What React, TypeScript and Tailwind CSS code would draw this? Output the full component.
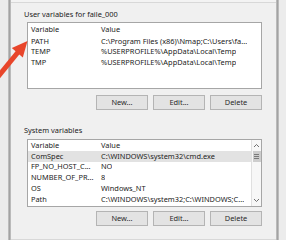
const userVars = [
  { name: 'PATH', value: 'C:\\Program Files (x86)\\Nmap;C:\\Users\\fa...' },
  { name: 'TEMP', value: '%USERPROFILE%\\AppData\\Local\\Temp' },
  { name: 'TMP', value: '%USERPROFILE%\\AppData\\Local\\Temp' },
];

const systemVars = [
  { name: 'ComSpec', value: 'C:\\WINDOWS\\system32\\cmd.exe', selected: true },
  { name: 'FP_NO_HOST_C...', value: 'NO' },
  { name: 'NUMBER_OF_PR...', value: '8' },
  { name: 'OS', value: 'Windows_NT' },
  { name: 'Path', value: 'C:\\WINDOWS\\system32;C:\\WINDOWS;C...' },
];

function Buttons({ className }: { className: string }) {
  return (
    <div className={`flex justify-end gap-[5px] ${className}`}>
      {['New...', 'Edit...', 'Delete'].map((label) => (
        <div
          key={label}
          className="flex h-[15px] w-[52px] items-center justify-center border border-[#b4b4b4] bg-[#e3e3e3] text-[#2a2a2a]"
        >
          {label}
        </div>
      ))}
    </div>
  );
}

function Row({ name, value, selected, h }: { name: string; value: string; selected?: boolean; h: string }) {
  return (
    <div className={`flex items-center whitespace-nowrap ${h} ${selected ? 'bg-[#e2e2e2]' : ''}`}>
      <span className="w-[70px] shrink-0 overflow-hidden pl-[3px]">{name}</span>
      <span className="overflow-hidden pl-[3px]">{value}</span>
    </div>
  );
}

function Chevron({ up }: { up?: boolean }) {
  return (
    <svg width="7" height="5" viewBox="0 0 7 5" className="text-[#606060]">
      <polyline
        points={up ? '1,4 3.5,1.5 6,4' : '1,1 3.5,3.5 6,1'}
        fill="none"
        stroke="currentColor"
        strokeWidth="0.9"
      />
    </svg>
  );
}

export default function App() {
  return (
    <div className="relative flex h-[240px] w-[286px] overflow-hidden bg-[#ececec] font-['Noto_Sans',sans-serif] text-[7.4px] text-[#222]">
      <div className="w-[8px] shrink-0" />
      <div className="w-[3px] shrink-0 bg-gradient-to-r from-[#c9c9c9] via-[#a3a3a3] to-[#c6c6c6]" />

      <div className="flex flex-1 flex-col bg-[#f3f3f3] pt-[2px]">
        <div className="flex flex-1 flex-col border-t border-b border-[#d8d8d8] bg-[#f0f0f0] pb-[2px]">
          <div className="mt-[5px] h-[12px] pl-[13px] leading-[12px]">User variables for faile_000</div>

          <div className="ml-[16px] mt-[2px] h-[67px] w-[235px] border border-[#a6a6a6] bg-white">
            <div className="flex h-[13px] items-center">
              <span className="w-[70px] pl-[3px]">Variable</span>
              <span className="pl-[3px]">Value</span>
            </div>
            {userVars.map((v) => (
              <Row key={v.name} name={v.name} value={v.value} h="h-[10.5px]" />
            ))}
          </div>

          <Buttons className="mt-[6px] w-[251px]" />

          <div className="mt-[14px] h-[12px] pl-[13px] leading-[12px]">System variables</div>

          <div className="ml-[16px] mt-[3px] flex h-[68px] w-[235px] overflow-hidden border border-[#a6a6a6] bg-white">
            <div className="min-w-0 flex-1">
              <div className="flex h-[11px] items-center">
                <span className="w-[70px] pl-[3px]">Variable</span>
                <span className="pl-[3px]">Value</span>
              </div>
              {systemVars.map((v) => (
                <Row key={v.name} name={v.name} value={v.value} selected={v.selected} h="h-[10.7px]" />
              ))}
            </div>
            <div className="flex w-[10px] shrink-0 flex-col items-center border-l border-[#e0e0e0] bg-[#f7f7f7]">
              <div className="flex h-[11px] items-center">
                <Chevron up />
              </div>
              <div className="flex h-[11px] w-[8px] flex-col items-center justify-center gap-[1px] bg-[#cdcdcd]">
                <div className="h-px w-[5px] bg-[#7a7a7a]" />
                <div className="h-px w-[5px] bg-[#7a7a7a]" />
                <div className="h-px w-[5px] bg-[#7a7a7a]" />
              </div>
              <div className="flex-1" />
              <div className="flex h-[11px] items-center">
                <Chevron />
              </div>
            </div>
          </div>

          <Buttons className="mt-[4px] w-[251px]" />
        </div>
      </div>

      <div className="w-[3px] shrink-0 bg-gradient-to-r from-[#c6c6c6] via-[#a3a3a3] to-[#c9c9c9]" />
      <div className="w-[7px] shrink-0" />

      <svg className="absolute left-0 top-0" width="40" height="80" viewBox="0 0 40 80">
        <line x1="-3" y1="78" x2="19" y2="51" stroke="#e8462b" strokeWidth="5" />
        <polygon points="27.5,41 11.8,48 22.8,57.4" fill="#e8462b" />
      </svg>
    </div>
  );
}
